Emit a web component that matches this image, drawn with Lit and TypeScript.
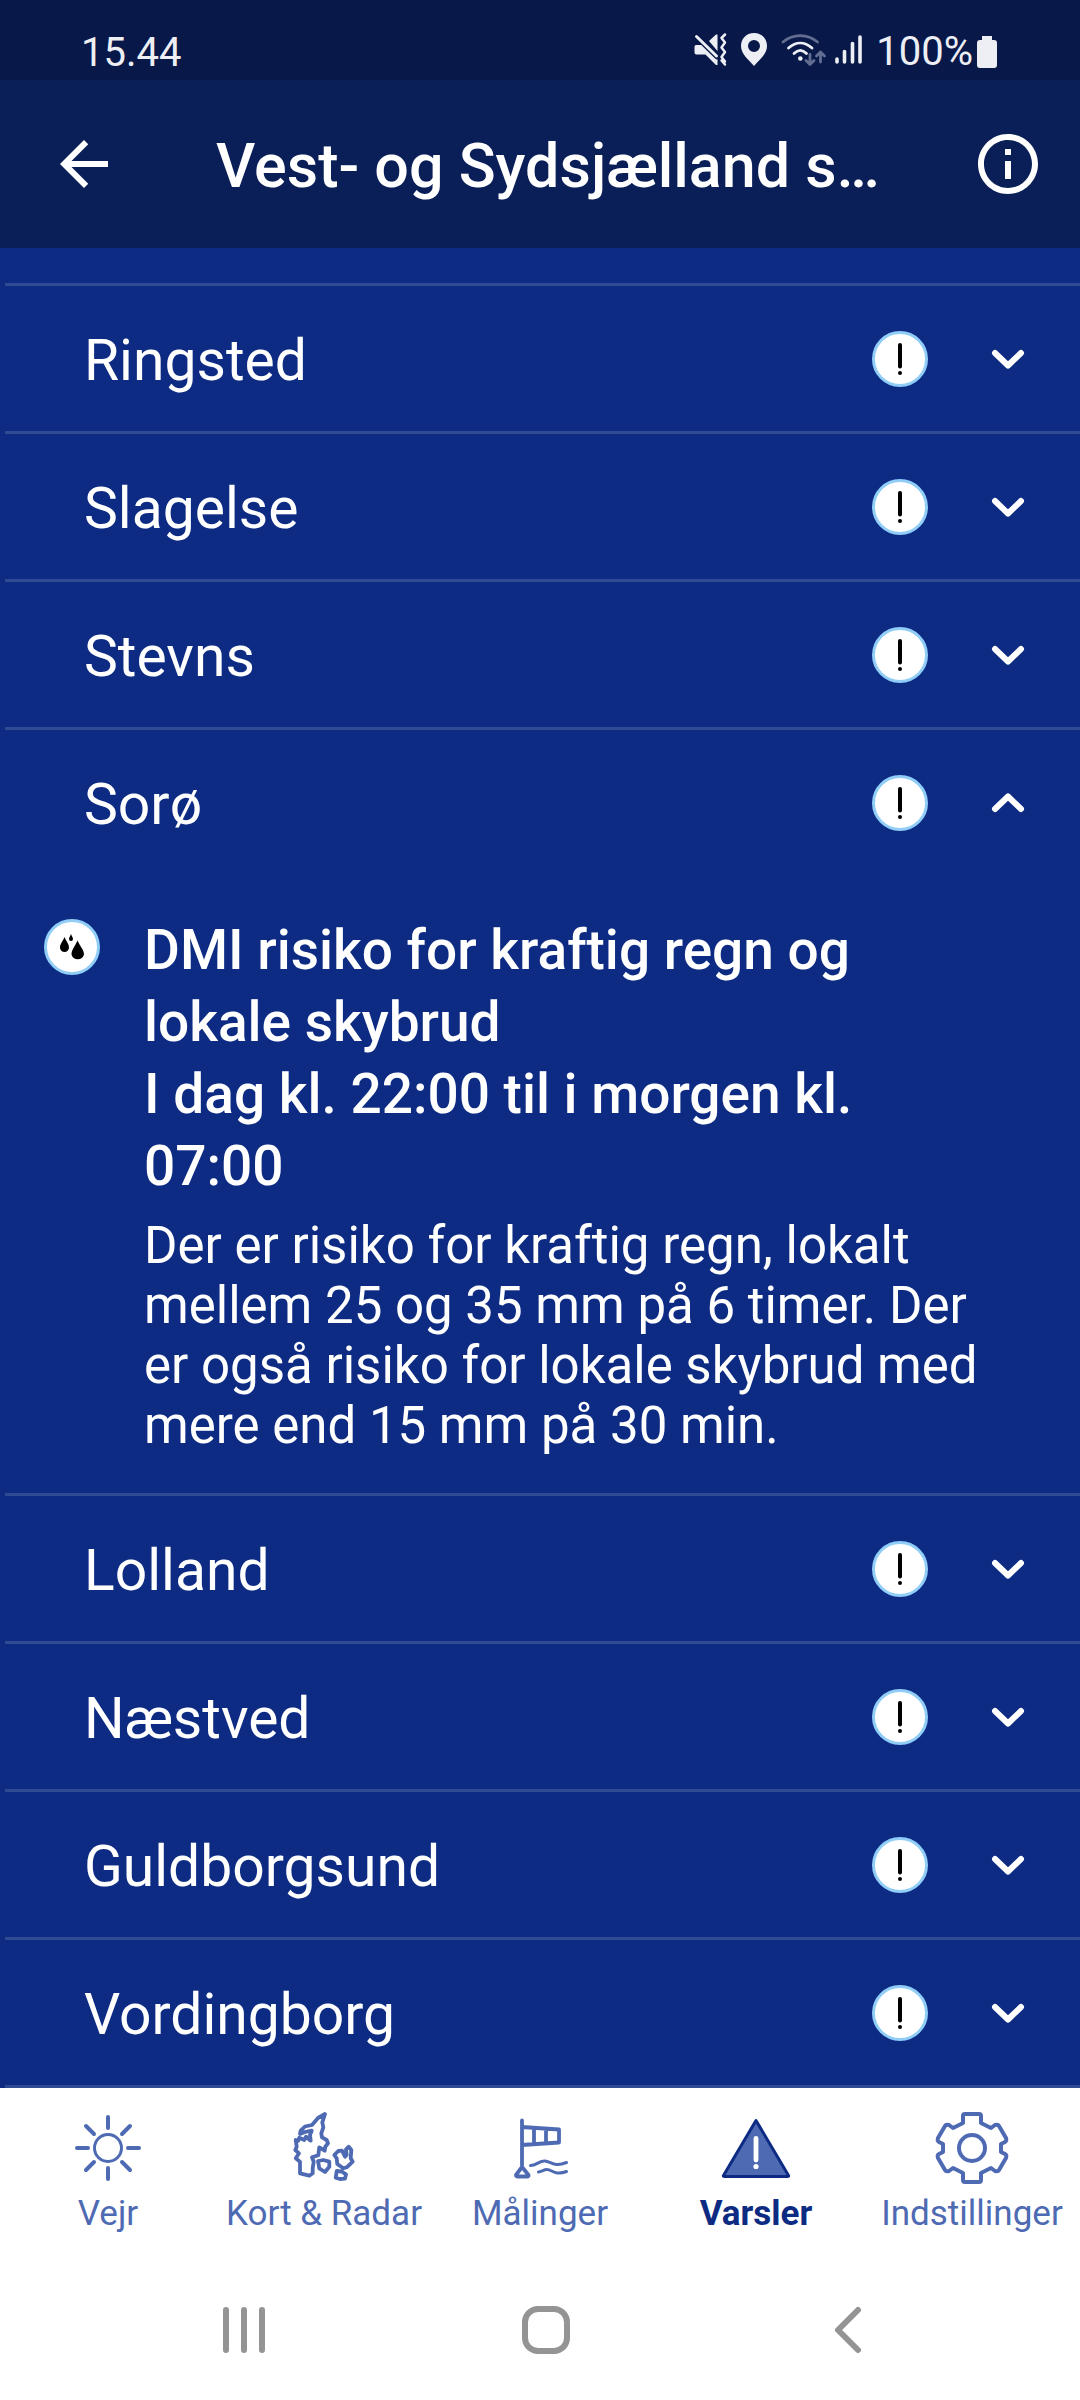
import { LitElement, html, svg, css, nothing } from "lit";
import { customElement, property, state } from "lit/decorators.js";
import { classMap } from "lit/directives/class-map.js";

const FONT = css`Roboto, "Liberation Sans", sans-serif`;

@customElement("status-bar")
class StatusBar extends LitElement {
  static styles = css`
    :host { display: flex; align-items: center; justify-content: space-between; height: 80px; box-sizing: border-box;
      padding: 24px 83px 0 81px; background: #071849; color: #eeeff4; font: 400 40px/52px ${FONT}; }
    .time { padding-top: 2px; }
    .icons { display: flex; align-items: center; }
    .glyphs { display: block; width: 183px; height: 40px; }
    .battery { display: block; width: 20px; height: 34px; margin-left: 4px; }
    .level { display: flex; align-items: center; }
  `;
  render() {
    return html`
      <span class="time">15.44</span>
      <span class="icons">
        <svg class="glyphs" viewBox="0 0 183 40" fill="none" stroke-linecap="round" stroke-linejoin="round" aria-hidden="true">
          <path d="M3 13h6l15.500 12.500V33h-1.500L12.500 22.500H3.500q-2 0-2-2v-5.500q0-2 1.500-2zM16 9l7-6.500h1.500V19z" fill="#eeeff4" />
          <path d="M3.500 4.500 24 24.500" stroke="#071849" stroke-width="5.500" />
          <path d="M3.500 4.500 23.500 24" stroke="#eeeff4" stroke-width="3" />
          <path d="M32 2.500 28.500 6l3.500 4.500-3.500 5 3.500 4.500-3.500 5L32 29.500M28.500 28.500l3.500 4" stroke="#eeeff4" stroke-width="2.500" />
          <path d="M61 1c-8 0-13 6-13 13 0 8 7 13 13 20 6-7 13-12 13-20 0-7-5-13-13-13zm0 7a6 6 0 1 1 0 12 6 6 0 0 1 0-12z" fill="#eeeff4" fill-rule="evenodd" />
          <g stroke-width="2.800">
            <path d="M90 10c10-8.500 24.500-8.500 34.500 0" stroke="#636d92" />
            <path d="M95.500 16c7.500-6.500 16-6.500 23.500 0M101 21.500c4-4 8.500-4 12.500 0" stroke="#eeeff4" />
            <path d="M117 22.500v10m-4-4 4 4 4-4M127.500 30v-10m-4 4 4-4 4 4" stroke="#636d92" />
          </g>
          <circle cx="107.300" cy="26.500" r="2.300" fill="#eeeff4" />
          <path d="M144 27v3M151.500 19.500V30M159.500 11.500V30M167 5v25" stroke="#eeeff4" stroke-width="3.600" />
        </svg>
        <span class="level">100%<svg class="battery" viewBox="0 0 20 34" aria-hidden="true"><path d="M5 1h10v4h2q3 0 3 3v22q0 3-3 3H3q-3 0-3-3V8q0-3 3-3h2z" fill="#eeeff4" /></svg></span>
      </span>
    `;
  }
}

@customElement("app-header")
class AppHeader extends LitElement {
  static styles = css`
    :host { display: flex; align-items: center; height: 168px; box-sizing: border-box; padding: 0 36px 0 48px;
      background: #0a1f57; color: #fff; font-family: ${FONT}; }
    .action { display: block; padding: 0; border: 0; background: none; color: inherit; width: 72px; height: 72px; flex: none; }
    .icon { display: block; width: 72px; height: 72px; fill: currentColor; }
    .title { flex: 1; min-width: 0; margin: 0; padding: 4px 60px 0 96px; font-size: 61px; line-height: 72px; font-weight: 500; white-space: nowrap; }
  `;
  render() {
    return html`
      <button class="action" aria-label="Tilbage">
        <svg class="icon" viewBox="0 0 24 24"><path d="M20 11H7.830l5.590-5.590L12 4l-8 8 8 8 1.410-1.410L7.830 13H20z" /></svg>
      </button>
      <h1 class="title">Vest- og Sydsjælland s…</h1>
      <button class="action" aria-label="Information">
        <svg class="icon" viewBox="0 0 24 24"><path d="M11 7h2v2h-2zm0 4h2v6h-2zm1-9C6.480 2 2 6.480 2 12s4.480 10 10 10 10-4.480 10-10S17.520 2 12 2zm0 18c-4.410 0-8-3.590-8-8s3.590-8 8-8 8 3.590 8 8-3.590 8-8 8z" /></svg>
      </button>
    `;
  }
}

@customElement("warning-row")
class WarningRow extends LitElement {
  @property() name = "";
  @property({ type: Boolean }) open = false;
  static styles = css`
    :host { display: block; margin-left: 5px; border-bottom: 3px solid #314b93; color: #fff; font-family: ${FONT}; }
    .head { display: flex; align-items: center; width: 100%; height: 145px; box-sizing: border-box; padding: 0 36px 0 79px;
      border: 0; background: none; color: inherit; font: inherit; text-align: left; }
    .name { flex: 1; padding-top: 4px; font-size: 57px; line-height: 72px; }
    .badge { display: block; width: 56px; height: 56px; flex: none; }
    .chevron { display: block; width: 72px; height: 72px; margin-left: 44px; flex: none; }
    .up { transform: scaleY(-1); }
  `;
  private toggle() {
    this.open = !this.open;
  }
  render() {
    return html`
      <button class="head" aria-expanded=${this.open ? "true" : "false"} @click=${this.toggle}>
        <span class="name">${this.name}</span>
        <svg class="badge" viewBox="0 0 56 56" aria-hidden="true">
          <circle cx="28" cy="28" r="26.500" fill="#fff" stroke="#90cdf7" stroke-width="3" />
          <path d="M28 14v21.500" stroke="#000" stroke-width="4" stroke-linecap="round" />
          <circle cx="28" cy="42" r="2" />
        </svg>
        <svg class=${classMap({ chevron: true, up: this.open })} viewBox="0 0 72 72" aria-hidden="true">
          <path d="M23 30 36 42.500 49 30" fill="none" stroke="#fff" stroke-width="6" stroke-linecap="round" stroke-linejoin="round" />
        </svg>
      </button>
      ${this.open ? html`<slot></slot>` : nothing}
    `;
  }
}

@customElement("warning-detail")
class WarningDetail extends LitElement {
  @property() heading = "";
  @property() period = "";
  static styles = css`
    :host { display: flex; align-items: flex-start; gap: 44px; padding: 39px 80px 37px 39px; }
    .badge { display: block; width: 56px; height: 56px; flex: none; margin-top: 5px; }
    .text { flex: 1; min-width: 0; }
    .title { margin: 0; padding-right: 84px; font-size: 55px; line-height: 72px; font-weight: 500; }
    .body { margin: 14px 0 0; font-size: 51px; line-height: 60px; }
  `;
  render() {
    return html`
      <svg class="badge" viewBox="0 0 56 56" aria-hidden="true">
        <circle cx="28" cy="28" r="26.500" fill="#fff" stroke="#90cdf7" stroke-width="3" />
        <path d="M20.500 18c2 5 4.500 7 4.500 10.500a4.500 4.500 0 0 1-9 0C16 25 18.500 23 20.500 18zM27 15c1 2.500 2 3.500 2 5a2 2 0 0 1-4 0c0-1.500 1-2.500 2-5zM33.500 21.500c2.500 6 6.500 9 6.500 14a6.500 6.500 0 0 1-12.500 0c0-5 3.500-8 6-14z" />
      </svg>
      <div class="text">
        <h2 class="title">${this.heading}<br />${this.period}</h2>
        <p class="body"><slot></slot></p>
      </div>
    `;
  }
}

const icons = {
  sun: svg`<circle cx="36" cy="36" r="13.500" /><path stroke-width="4" d="M36 5v11M36 56v11M5 36h11M56 36h11M14 14l8 8M58 14l-8 8M14 58l8-8M58 58l-8-8" />`,
  map: svg`<path stroke-width="3.800" d="M37 2 30 6l-6 7-7 1.500-4.300 4.200L12 22l5-2 6.700-1.300L22 23l.7 5.700-4.700-4-1.700 3.300-5-2.300-1 3-2.600-.7 1 6.700L7.300 38l3.700 3.300-3.300 5 4.300 3.400v11.600l9.300 2.400 3.400-2.400v-5l1-6.600-1.700-4.400 6.300-2 1-8 5.400 3.400.6-4 2.700-3.400-1.300-3.300-4.700-2.700-.7-4 2-6-1-5zM30 49l5.300-1 6 1.700v5L37 60l-5.700-3.700zM46.300 43l4-4 3.700-.3 3 6 1.700-1.700-.7-5.700 2.700-2.600 2.600 3.300-.6 8.300 2 3.400-6 5.600-3.400 1-6-4.300-.6-5.700zM48.700 59l5 .5 4.300 2.800-1 4.400-5 .3-4.300-1.300z" />`,
  sock: svg`<path stroke-width="3.800" d="M18 8.500v45M18 15l37 2.500v13L18 33M30 16.500v15M42 17.500v13M18 55l-6 8q0 1.500 2 1.500h9q2 0 1.500-1.500z" /><path d="M26.500 53.500c6 0 9-5 14.500-4.500s9 6.500 21.500 1.500M34.500 60c3-.5 5.500-2.500 8.500-2.500 5 0 8 6.500 19.500 2" />`,
  warn: svg`<path d="M36 8.500 68.500 63.500q.5 1-1 1h-63q-1.500 0-1-1z" fill="#4e6ab3" stroke="#0d2b83" /><path stroke="#fff" stroke-width="4.800" d="M36 26.500v21.500" /><circle cx="36" cy="54.500" r="2.600" fill="#fff" stroke="none" />`,
  gear: svg`<circle cx="36" cy="36" r="13" stroke-width="4" /><path stroke-width="4" d="M27 11V4q0-2 2-2h14q2 0 2 2v7l10 5 4-3q3-1 4 1l7 12q1 3-1 4l-4 2v8l4 2q2 1 1 4l-7 12q-1 2-4 1l-4-3-10 5v7q0 2-2 2H29q-2 0-2-2v-7l-10-5-4 3q-3 1-4-1l-7-12q-1-3 1-4l4-2v-8l-4-2q-2-1-1-4l7-12q1-2 4-1l4 3z" />`,
};

@customElement("tab-bar")
class TabBar extends LitElement {
  static styles = css`
    :host { display: block; background: #fff; font-family: ${FONT}; }
    .tabs { display: grid; grid-template-columns: repeat(5, 1fr); padding: 24px 0 14px; }
    .tab { display: flex; flex-direction: column; align-items: center; gap: 10px; color: #4e6ab3; text-decoration: none;
      font-size: 35px; line-height: 40px; white-space: nowrap; }
    .active { color: #0d2b83; font-weight: 700; }
    .icon { display: block; width: 72px; height: 72px; overflow: visible; fill: none; stroke: currentColor; stroke-width: 3;
      stroke-linecap: round; stroke-linejoin: round; }
  `;
  render() {
    const tabs = [
      { label: "Vejr", icon: icons.sun },
      { label: "Kort & Radar", icon: icons.map },
      { label: "Målinger", icon: icons.sock },
      { label: "Varsler", icon: icons.warn, active: true },
      { label: "Indstillinger", icon: icons.gear },
    ];
    return html`<nav class="tabs">
      ${tabs.map((t) => html`<a href="#" class=${classMap({ tab: true, active: !!t.active })} aria-current=${t.active ? "page" : nothing}>
        <svg class="icon" viewBox="0 0 72 72" aria-hidden="true">${t.icon}</svg>
        <span>${t.label}</span>
      </a>`)}
    </nav>`;
  }
}

@customElement("system-nav")
class SystemNav extends LitElement {
  static styles = css`
    :host { display: grid; grid-template-columns: repeat(3, 1fr); justify-items: center; padding: 58px 81px 46px 93px; background: #fff; }
    .key { display: block; padding: 0; border: 0; background: none; }
    .icon { display: block; width: 48px; height: 48px; fill: none; stroke: #949494; stroke-width: 6; stroke-linecap: round; stroke-linejoin: round; }
  `;
  render() {
    return html`
      <button class="key" aria-label="Seneste"><svg class="icon" viewBox="0 0 48 48"><path d="M6 4v40M24 4v40M42 4v40" /></svg></button>
      <button class="key" aria-label="Hjem"><svg class="icon" viewBox="0 0 48 48"><rect x="3" y="3" width="42" height="42" rx="13" /></svg></button>
      <button class="key" aria-label="Tilbage"><svg class="icon" viewBox="0 0 48 48"><path d="M34 4 14 24 34 44" /></svg></button>
    `;
  }
}

@customElement("app-root")
class AppRoot extends LitElement {
  @state() private regions = ["Ringsted", "Slagelse", "Stevns", "Sorø", "Lolland", "Næstved", "Guldborgsund", "Vordingborg"];
  static styles = css`
    :host { display: flex; flex-direction: column; min-height: 100vh; background: #0d2b83; font-family: ${FONT}; }
    .list { flex: 1; }
    .previous { height: 35px; margin-left: 5px; border-bottom: 3px solid #314b93; }
  `;
  render() {
    return html`
      <status-bar></status-bar>
      <app-header></app-header>
      <main class="list">
        <div class="previous"></div>
        ${this.regions.map((r) => html`<warning-row .name=${r} .open=${r === "Sorø"}>
          ${r === "Sorø"
            ? html`<warning-detail .heading=${"DMI risiko for kraftig regn og lokale skybrud"} .period=${"I dag kl. 22:00 til i morgen kl. 07:00"}>Der er risiko for kraftig regn, lokalt mellem 25 og 35 mm på 6 timer. Der er også risiko for lokale skybrud med mere end 15 mm på 30 min.</warning-detail>`
            : nothing}
        </warning-row>`)}
      </main>
      <tab-bar></tab-bar>
      <system-nav></system-nav>
    `;
  }
}
